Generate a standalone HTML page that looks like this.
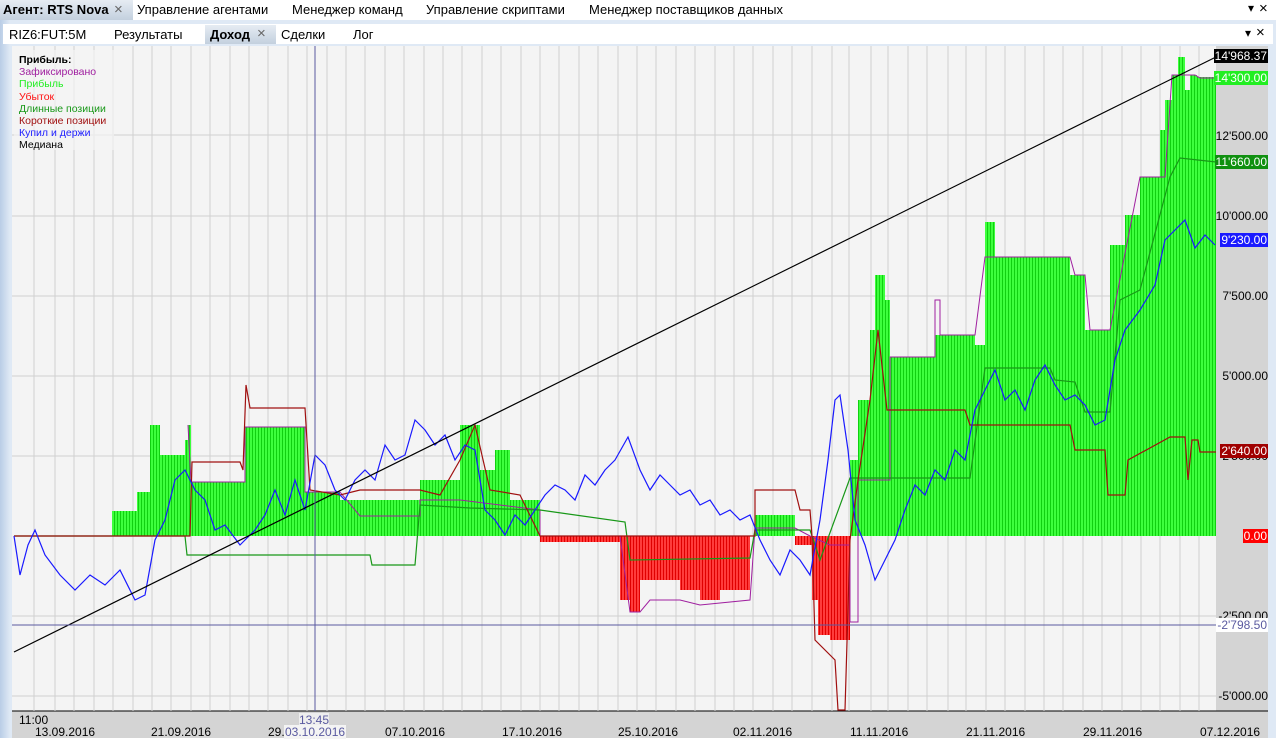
<!DOCTYPE html>
<html><head><meta charset="utf-8"><style>
*{margin:0;padding:0;box-sizing:border-box}
body{width:1276px;height:738px;overflow:hidden;background:#fff;font-family:"Liberation Sans",sans-serif;font-size:11px;color:#000;position:relative}
.t{position:absolute;white-space:nowrap}
</style></head><body>
<div style="position:absolute;left:0;top:0;width:1276px;height:20px;background:#fff"></div>
<div style="position:absolute;left:0;top:0;width:133px;height:20px;background:linear-gradient(#e6ecf3,#c3d0de)"></div>
<div class="t" style="left:3px;top:2px;font-weight:bold;font-size:13px">Агент: RTS Nova</div>
<div class="t" style="left:114px;top:1px;font-size:15px;color:#666">×</div>
<div class="t" style="left:137px;top:2px;font-size:13px">Управление агентами</div>
<div class="t" style="left:292px;top:2px;font-size:13px">Менеджер команд</div>
<div class="t" style="left:426px;top:2px;font-size:13px">Управление скриптами</div>
<div class="t" style="left:589px;top:2px;font-size:13px">Менеджер поставщиков данных</div>
<div class="t" style="left:1248px;top:1px;font-size:12px">▾</div>
<div class="t" style="left:1259px;top:0px;font-size:15px">×</div>
<div style="position:absolute;left:0;top:20px;width:1276px;height:718px;background:linear-gradient(90deg,#b9cde6,#dfe9f5 10px,#dfe9f5)"></div>
<div style="position:absolute;left:3px;top:24px;width:1270px;height:20px;background:#fff"></div>
<div style="position:absolute;left:205px;top:25px;width:71px;height:19px;background:linear-gradient(#e6ecf3,#c3d0de)"></div>
<div class="t" style="left:9px;top:27px;font-size:13px">RIZ6:FUT:5M</div>
<div class="t" style="left:114px;top:27px;font-size:13px">Результаты</div>
<div class="t" style="left:210px;top:27px;font-size:13px;font-weight:bold">Доход</div>
<div class="t" style="left:257px;top:25px;font-size:15px;color:#666">×</div>
<div class="t" style="left:281px;top:27px;font-size:13px">Сделки</div>
<div class="t" style="left:353px;top:27px;font-size:13px">Лог</div>
<div class="t" style="left:1245px;top:26px;font-size:12px">▾</div>
<div class="t" style="left:1256px;top:24px;font-size:15px">×</div>
<svg style="position:absolute;left:0;top:0" width="1276" height="738">
<defs>
<pattern id="g" width="3" height="10" patternUnits="userSpaceOnUse"><rect width="3" height="10" fill="#3dff3d"/><rect width="1" height="10" fill="#10d010"/></pattern>
<pattern id="r" width="3" height="10" patternUnits="userSpaceOnUse"><rect width="3" height="10" fill="#ff3c3c"/><rect width="1" height="10" fill="#e00000"/></pattern>
</defs>
<rect x="12" y="46" width="1204" height="665" fill="#f4f4f4"/>
<rect x="1216" y="46" width="52" height="665" fill="#d4d4d4"/>
<rect x="12" y="711" width="1256" height="27" fill="#d4d4d4"/>
<line x1="12" y1="711" x2="1268" y2="711" stroke="#000"/>
<g stroke="#d0d0d0" stroke-width="1">
<path d="M34 46V711M55 46V711M74 46V711M94 46V711M113 46V711M133 46V711M152 46V711M171 46V711M191 46V711M210 46V711M230 46V711M249 46V711M268 46V711M288 46V711M307 46V711M327 46V711M346 46V711M365 46V711M385 46V711M404 46V711M424 46V711M443 46V711M462 46V711M482 46V711M501 46V711M521 46V711M540 46V711M559 46V711M579 46V711M598 46V711M618 46V711M637 46V711M656 46V711M676 46V711M695 46V711M715 46V711M734 46V711M753 46V711M773 46V711M792 46V711M812 46V711M832 46V711M849 46V711M871 46V711M888 46V711M908 46V711M927 46V711M948 46V711M966 46V711M986 46V711M1005 46V711M1025 46V711M1044 46V711M1063 46V711M1083 46V711M1102 46V711M1122 46V711M1141 46V711M1160 46V711M1180 46V711M1199 46V711"/>
<path d="M12 135H1216M12 216H1216M12 296H1216M12 376H1216M12 456H1216M12 616H1216M12 696H1216"/>
</g>
<path fill="url(#g)" d="M112 536V511H137V492H150V425H160V455H185V440H188V425H191V482H245V427H305V492H340V500H420V480H460V425H480V470H495V450H510V500H540V536Z"/>
<path fill="url(#g)" d="M755 536V515H795V536Z"/>
<path fill="url(#g)" d="M850 536V460H858V400H870V330H875V275H885V300H890V357H935V335H975V345H985V222H995V257H1070V275H1085V330H1110V245H1125V215H1140V177H1160V130H1165V100H1172V75H1178V57H1185V90H1190V75H1197V77H1216V536Z"/>
<path fill="url(#r)" d="M540 536V542H620V600H630V612H640V580H680V590H700V600H720V590H750V536Z"/>
<path fill="url(#r)" d="M795 536V545H812V600H818V635H830V640H850V536Z"/>
<polyline fill="none" stroke="#a020a0" stroke-width="1" points="188,425 191,482 245,482 245,427 305,427 305,492 340,492 360,516 420,516 420,500 460,500 540,510 540,536 620,536 630,612 640,612 650,600 680,600 700,605 750,600 755,528 795,528 810,536 830,545 850,545 850,622 858,622 858,480 890,480 890,357 935,357 935,300 940,300 940,335 975,335 985,257 1070,257 1075,275 1085,275 1090,330 1110,330 1140,177 1165,177 1172,75 1195,75 1200,78 1216,78"/>
<polyline fill="none" stroke="#189818" stroke-width="1.2" points="14,536 185,536 187,555 370,555 372,565 415,565 420,505 470,508 540,510 625,522 630,560 750,558 755,530 810,530 820,560 850,478 970,478 985,368 1050,368 1055,380 1075,382 1085,412 1110,412 1120,300 1140,290 1170,177 1180,158 1216,162"/>
<polyline fill="none" stroke="#a01010" stroke-width="1.2" points="14,536 190,536 192,462 240,462 243,470 246,385 250,408 305,408 310,490 340,495 360,490 420,490 440,495 460,460 475,425 490,490 520,495 540,536 755,536 755,490 795,490 800,510 810,510 812,536 815,640 835,660 838,710 845,710 850,540 858,480 870,400 878,330 887,410 965,410 970,425 1070,425 1075,450 1105,450 1108,495 1125,495 1128,460 1170,437 1185,437 1188,480 1192,440 1198,440 1200,452 1216,452"/>
<polyline fill="none" stroke="#1a1aff" stroke-width="1.2" points="14,536 20,575 28,545 35,530 45,555 60,575 75,590 90,575 105,585 120,570 135,600 145,595 155,540 165,520 175,480 185,470 195,490 205,500 215,530 225,525 240,545 255,530 265,515 275,490 285,515 295,480 305,510 315,455 325,465 335,490 345,500 355,480 365,470 375,480 385,445 395,460 405,455 415,420 425,430 435,445 445,435 455,460 465,445 475,450 485,510 495,520 505,535 515,515 525,525 535,510 545,495 555,485 565,490 575,500 585,475 595,485 605,470 615,460 628,437 640,470 650,490 660,475 670,485 680,495 690,490 700,505 710,500 720,515 730,510 740,520 750,515 760,540 770,560 780,575 790,550 800,560 810,575 820,520 828,460 835,400 840,395 848,450 855,520 865,545 875,580 885,560 895,540 905,510 915,485 925,495 935,470 945,480 955,450 965,460 975,410 985,390 995,370 1005,400 1015,390 1025,410 1035,380 1045,365 1055,385 1065,400 1075,395 1085,405 1095,425 1105,420 1115,360 1125,330 1140,310 1155,285 1165,240 1175,230 1185,220 1195,248 1205,235 1215,245"/>
<line x1="14" y1="652" x2="1216" y2="57" stroke="#000" stroke-width="1.2"/>
<line x1="12" y1="625" x2="1216" y2="625" stroke="#5a5aa0"/>
<line x1="315" y1="46" x2="315" y2="711" stroke="#5a5aa0"/>
<rect x="14" y="50" width="100" height="100" fill="#f4f4f4" opacity="0.7"/>
</svg>
<div class="t" style="left:19px;top:54px;line-height:12.2px;font-size:10.5px">
<div style="font-weight:bold">Прибыль:</div>
<div style="color:#a020a0">Зафиксировано</div>
<div style="color:#22ee22">Прибыль</div>
<div style="color:#ff1010">Убыток</div>
<div style="color:#189818">Длинные позиции</div>
<div style="color:#a01010">Короткие позиции</div>
<div style="color:#2020ff">Купил и держи</div>
<div>Медиана</div>
</div>
<div class="t" style="right:8px;top:49px;background:#000;color:#fff;padding:0 1px;font-size:12px">14'968.37</div>
<div class="t" style="right:8px;top:71px;background:#22ee22;color:#fff;padding:0 1px;font-size:12px">14'300.00</div>
<div class="t" style="right:8px;top:129px;font-size:12px">12'500.00</div>
<div class="t" style="right:8px;top:155px;background:#109010;color:#fff;padding:0 1px;font-size:12px">11'660.00</div>
<div class="t" style="right:8px;top:209px;font-size:12px">10'000.00</div>
<div class="t" style="right:8px;top:233px;background:#1a1aff;color:#fff;padding:0 1px;font-size:12px">9'230.00</div>
<div class="t" style="right:8px;top:289px;font-size:12px">7'500.00</div>
<div class="t" style="right:8px;top:369px;font-size:12px">5'000.00</div>
<div class="t" style="right:8px;top:449px;font-size:12px">2'500.00</div>
<div class="t" style="right:8px;top:444px;background:#a00000;color:#fff;padding:0 1px;font-size:12px">2'640.00</div>
<div class="t" style="right:8px;top:529px;background:#ff0000;color:#fff;padding:0 1px;font-size:12px">0.00</div>
<div class="t" style="right:8px;top:609px;font-size:12px">-2'500.00</div>
<div class="t" style="right:8px;top:618px;background:#fff;color:#5a5aa0;padding:0 1px;font-size:12px">-2'798.50</div>
<div class="t" style="right:8px;top:689px;font-size:12px">-5'000.00</div>
<div class="t" style="left:19px;top:713px;font-size:12px">11:00</div>
<div class="t" style="left:35px;top:725px;font-size:12px">13.09.2016</div>
<div class="t" style="left:151px;top:725px;font-size:12px">21.09.2016</div>
<div class="t" style="left:268px;top:725px;font-size:12px">29.</div>
<div class="t" style="left:299px;top:713px;color:#5a5aa0;background:#eee;font-size:12px">13:45</div>
<div class="t" style="left:284px;top:725px;color:#5a5aa0;background:#f4f4f4;padding:0 1px;font-size:12px">03.10.2016</div>
<div class="t" style="left:385px;top:725px;font-size:12px">07.10.2016</div>
<div class="t" style="left:502px;top:725px;font-size:12px">17.10.2016</div>
<div class="t" style="left:618px;top:725px;font-size:12px">25.10.2016</div>
<div class="t" style="left:733px;top:725px;font-size:12px">02.11.2016</div>
<div class="t" style="left:850px;top:725px;font-size:12px">11.11.2016</div>
<div class="t" style="left:966px;top:725px;font-size:12px">21.11.2016</div>
<div class="t" style="left:1083px;top:725px;font-size:12px">29.11.2016</div>
<div class="t" style="left:1200px;top:725px;font-size:12px">07.12.2016</div>
</body></html>
